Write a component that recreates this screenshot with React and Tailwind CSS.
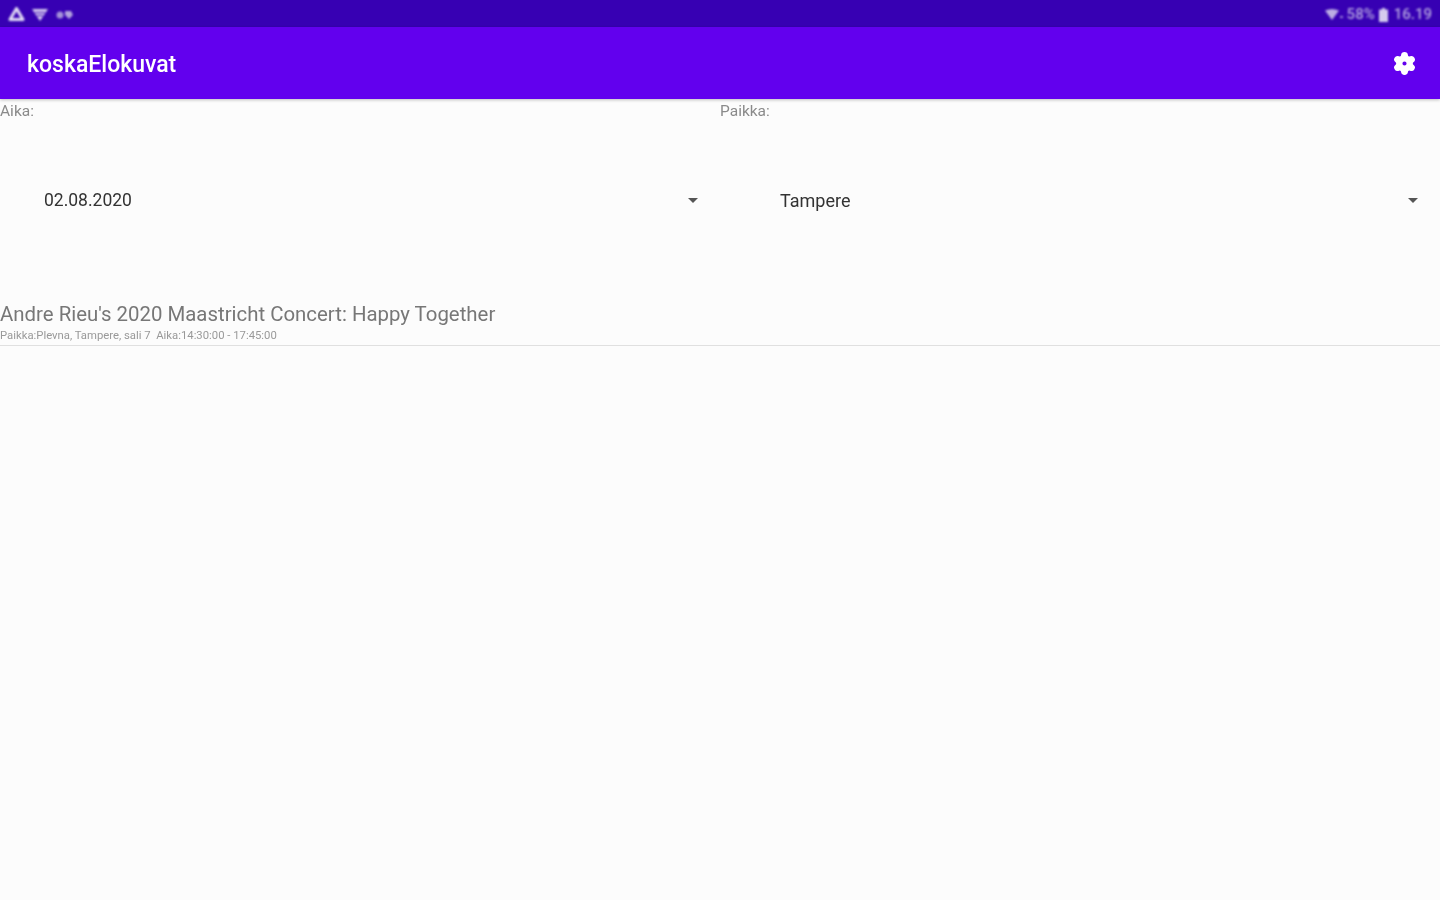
import { Settings } from "lucide-react";

function Caret() {
  return (
    <svg width="10" height="5" viewBox="0 0 10 5" className="shrink-0 -mt-[1px] blur-[0.6px]">
      <path d="M0 0h10L5 5z" fill="#555" />
    </svg>
  );
}

function StatusBar() {
  return (
    <div className="h-[27px] bg-[#3700b3] flex items-center justify-between pl-2 pr-2 text-[#b5a6e0]">
      <div className="flex items-center gap-[7px] blur-[0.8px] pt-[1px]">
        <svg width="17" height="16" viewBox="0 0 17 16">
          <path d="M8.5 2.500 15 13.500H2z" fill="none" stroke="#e2dcf4" strokeWidth="3" strokeLinejoin="round" />
        </svg>
        <svg width="16" height="13" viewBox="0 0 16 13">
          <path d="M0 1h16L8 13z" fill="#d5cbee" />
          <path d="M3 4.500h10M5 7.500h6" stroke="#3700b3" strokeWidth="1" />
        </svg>
        <svg width="18" height="9" viewBox="0 0 18 9">
          <circle cx="5" cy="5" r="3.500" fill="#a592d8" />
          <path d="M10 1h6l2 4-4 4-4-4z" fill="#b3a3de" />
        </svg>
      </div>
      <div className="flex items-center gap-[4px] text-[15px] leading-none pt-[2px] font-medium blur-[0.8px]">
        <svg width="18" height="12" viewBox="0 0 18 12">
          <path d="M0 1.500Q7-1.500 14 1.500L7 11z" fill="#bcaee3" />
          <path d="M15 8h3" stroke="#bcaee3" strokeWidth="1.500" />
        </svg>
        <span>58%</span>
        <svg width="9" height="14" viewBox="0 0 9 14">
          <path d="M3 0h3v1.500h3V14H0V1.500h3z" fill="#d5cbee" />
        </svg>
        <span className="ml-[2px]">16.19</span>
      </div>
    </div>
  );
}

function Picker({ label, value, valueClass, className }) {
  return (
    <div className={className}>
      <div className="h-[24px] text-[15.5px] leading-[24px] text-[#8a8a8a] blur-[0.7px]">{label}</div>
      <div className="h-[155px] flex items-center justify-between pr-[22px]">
        <span className={`text-[#333] blur-[0.7px] ${valueClass}`}>{value}</span>
        <Caret />
      </div>
    </div>
  );
}

export default function App() {
  return (
    <div className="h-[900px] flex flex-col bg-[#fcfcfc] font-['Roboto',sans-serif] overflow-hidden">
      <StatusBar />
      <div className="h-[72px] bg-[#6200ee] flex items-center justify-between pl-[27px] pr-[23px] shadow-[0_1px_3px_rgba(0,0,0,0.25)] relative">
        <span className="text-[23px] font-medium text-white pt-[5px] blur-[0.6px]">koskaElokuvat</span>
        <Settings size={25} color="#fff" fill="#fff" strokeWidth={2} className="[&>circle]:fill-[#6200ee] blur-[0.5px]" />
      </div>
      <div className="flex">
        <Picker label="Aika:" value="02.08.2020" valueClass="ml-[44px] text-[17.5px]" className="w-[720px]" />
        <Picker label="Paikka:" value="Tampere" valueClass="ml-[60px] text-[18px]" className="w-[720px]" />
      </div>
      <div className="pt-[24px] border-b border-[#e0e0e0]">
        <div className="text-[20.4px] leading-[24px] text-[#777] blur-[0.7px]">Andre Rieu's 2020 Maastricht Concert: Happy Together</div>
        <div className="text-[11.3px] leading-[19px] text-[#999] blur-[0.7px]">Paikka:Plevna, Tampere, sali 7&nbsp; Aika:14:30:00 - 17:45:00</div>
      </div>
    </div>
  );
}
